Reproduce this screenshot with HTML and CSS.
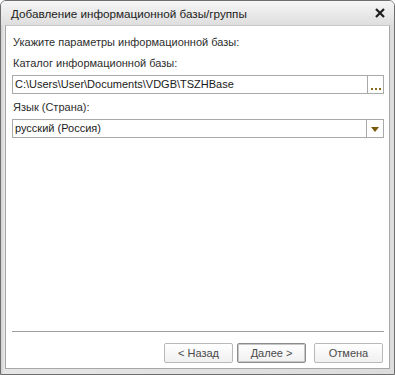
FILE: index.html
```html
<!DOCTYPE html>
<html lang="ru">
<head>
<meta charset="utf-8">
<link rel="stylesheet" href="styles.css">
</head>
<body>
<div class="window">
  <div class="titlebar">
    <span class="title">Добавление информационной базы/группы</span>
    <span class="close" aria-label="Закрыть">
      <svg width="10" height="10" viewBox="0 0 10 10"><path d="M1 1 L9 9 M9 1 L1 9" stroke="#1e1e1e" stroke-width="2.2" fill="none"/></svg>
    </span>
  </div>
  <div class="frame">
    <div class="content">
      <div class="label first">Укажите параметры информационной базы:</div>
      <div class="label second">Каталог информационной базы:</div>
      <div class="field">
        <span class="value">C:\Users\User\Documents\VDGB\TSZHBase</span>
        <span class="btn-side dots"><i></i><i></i><i></i></span>
      </div>
      <div class="label third">Язык (Страна):</div>
      <div class="field select">
        <span class="value">русский (Россия)</span>
        <span class="btn-side arrow"><svg width="8" height="5" viewBox="0 0 8 5"><path d="M0 0 H8 L4 5 Z" fill="#7a5a0a"/></svg></span>
      </div>
      <div class="spacer"></div>
      <div class="separator"></div>
      <div class="buttons">
        <button class="btn">&lt; Назад</button>
        <button class="btn default">Далее &gt;</button>
        <button class="btn cancel">Отмена</button>
      </div>
    </div>
  </div>
</div>
</body>
</html>
```
FILE: styles.css
```css
html, body {
  margin: 0;
  padding: 0;
  background: #ffffff;
}
body {
  font-family: "Liberation Sans", Arial, sans-serif;
  font-size: 11px;
  color: #2e2e2e;
}
.window {
  width: 395px;
  height: 375px;
  box-sizing: border-box;
  border: 1px solid #6e6e6e;
  border-radius: 6px 6px 0 0;
  background: linear-gradient(to bottom, #f4f4f4 0px, #e2e2e2 24px, #d6d6d6 100%);
  display: flex;
  flex-direction: column;
  overflow: hidden;
}
.titlebar {
  height: 24px;
  flex: none;
  display: flex;
  align-items: center;
  padding: 0 8px 0 10px;
  background: linear-gradient(to bottom, #f6f6f6, #dedede);
}
.title {
  flex: 1;
  color: #222222;
  font-size: 11.7px;
  line-height: 14px;
  padding-top: 1px;
}
.close {
  width: 10px;
  height: 10px;
  display: flex;
  margin-right: 1px;
}
.frame {
  flex: 1;
  display: flex;
  padding: 0 4px 5px 4px;
  background: linear-gradient(to right, #d0d0d0, #e6e6e6 3px, #dcdcdc);
}
.content {
  flex: 1;
  background: #ffffff;
  border: 1px solid #a7a7a7;
  border-top-color: #c8c8c8;
  display: flex;
  flex-direction: column;
  padding: 9px 5px 5px 6px;
}
.label {
  line-height: 14px;
  padding-left: 1px;
}
.second { margin-top: 7px; }
.third { margin-top: 6px; }
.field {
  margin-top: 5px;
  height: 19px;
  box-sizing: border-box;
  border: 1px solid #a9a9a9;
  display: flex;
  align-items: stretch;
}
.value {
  flex: 1;
  line-height: 17px;
  padding-left: 2px;
  color: #1a1a1a;
  white-space: nowrap;
  overflow: hidden;
}
.btn-side {
  width: 16px;
  border-left: 1px solid #a9a9a9;
  display: flex;
  align-items: center;
  justify-content: center;
}
.dots {
  align-items: flex-end;
  gap: 2px;
  padding-bottom: 3px;
  box-sizing: border-box;
}
.dots i {
  width: 2px;
  height: 2px;
  background: #8a6a1a;
}
.arrow svg { margin-top: 1px; }
.spacer { flex: 1; }
.separator {
  height: 1px;
  background: #a0a0a0;
  margin-bottom: 11px;
}
.buttons {
  display: flex;
  justify-content: flex-end;
  gap: 4px;
  padding-right: 1px;
}
.btn {
  font-family: "Liberation Sans", Arial, sans-serif;
  font-size: 11px;
  color: #4a4a4a;
  width: 69px;
  height: 20px;
  padding: 0;
  box-sizing: border-box;
  border: 1px solid #b8b8b8;
  border-radius: 2px;
  background: linear-gradient(to bottom, #ffffff, #f0f0f0);
}
.btn.default {
  border: 1px solid #8c8c8c;
  box-shadow: inset 0 0 0 1px #c8c8c8;
}
.btn.cancel { margin-left: 4px; }
```
